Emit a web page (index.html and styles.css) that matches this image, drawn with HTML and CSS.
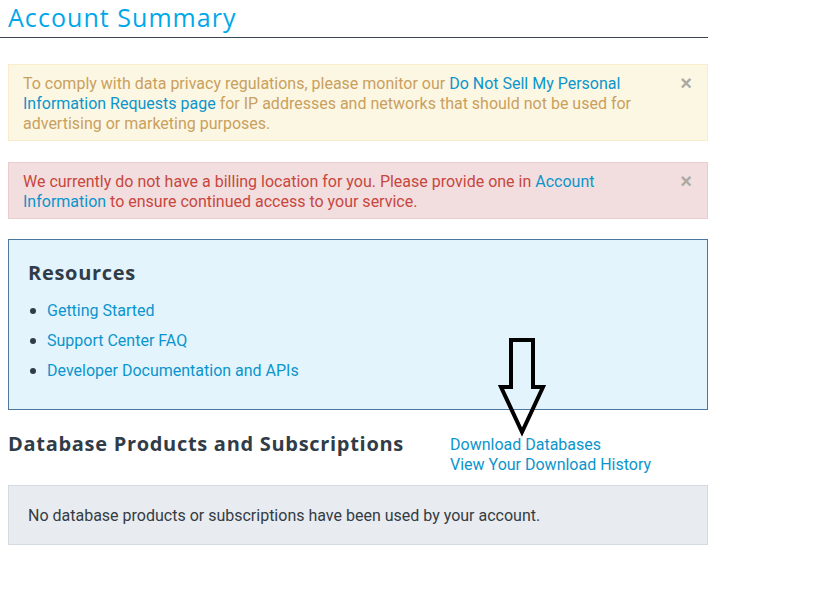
FILE: index.html
```html
<!DOCTYPE html>
<html>
<head>
<meta charset="utf-8">
<link rel="stylesheet" href="styles.css">
</head>
<body>
<main class="page">
  <h1 class="title">Account Summary</h1>
  <div class="alert alert-warning">
    <span class="close">×</span>
    To comply with data privacy regulations, please monitor our <a href="#">Do Not Sell My Personal Information Requests page</a> for IP addresses and networks that should not be used for advertising or marketing purposes.
  </div>
  <div class="alert alert-danger">
    <span class="close">×</span>
    We currently do not have a billing location for you. Please provide one in <a href="#">Account Information</a> to ensure continued access to your service.
  </div>
  <section class="resources">
    <h2 class="res-title">Resources</h2>
    <ul class="res-list">
      <li><a href="#">Getting Started</a></li>
      <li><a href="#">Support Center FAQ</a></li>
      <li><a href="#">Developer Documentation and APIs</a></li>
    </ul>
  </section>
  <div class="db-row">
    <h2 class="db-title">Database Products and Subscriptions</h2>
    <div class="db-links">
      <a href="#">Download Databases</a>
      <a href="#">View Your Download History</a>
    </div>
  </div>
  <div class="empty">No database products or subscriptions have been used by your account.</div>
  <svg class="arrow" width="52" height="100" viewBox="0 0 52 100">
    <path d="M14 3 H36 V50 H46 L25 95 L4 50 H14 Z" fill="none" stroke="#000" stroke-width="4" stroke-linejoin="miter"/>
  </svg>
</main>
</body>
</html>
```
FILE: styles.css
```css
html, body {
  margin: 0;
  padding: 0;
  background: #fff;
}
body {
  font-family: Roboto, "Liberation Sans", sans-serif;
  font-size: 16px;
  line-height: 20px;
  color: #333;
}
a {
  color: #0b95cc;
  text-decoration: none;
}
.page {
  position: relative;
  width: 708px;
}
.title {
  margin: 0;
  padding: 2px 0 5px 8px;
  font-family: "Open Sans", "Liberation Sans", sans-serif;
  font-weight: 400;
  font-size: 25px;
  line-height: 30px;
  letter-spacing: 1.05px;
  color: #00a8ea;
  border-bottom: 1px solid #3b4651;
}
.alert {
  position: relative;
  margin-left: 8px;
  padding: 9px 40px 6px 14px;
  border: 1px solid;
}
.alert-warning {
  margin-top: 26px;
  background: #fcf7e3;
  border-color: #f9ebcc;
  color: #c9a05e;
}
.alert-danger {
  margin-top: 21px;
  background: #f2dede;
  border-color: #ebccd1;
  color: #c7473f;
}
.close {
  position: absolute;
  right: 15px;
  top: 8px;
  font-size: 20px;
  font-weight: 700;
  color: #a9a9a6;
  font-family: "Liberation Sans", sans-serif;
}
.resources {
  margin: 20px 0 0 8px;
  padding: 21px 19px 28px;
  background: #e3f4fd;
  border: 1px solid #4e77a0;
}
.res-title {
  margin: 0 0 16px;
  font-family: "Open Sans", "Liberation Sans", sans-serif;
  font-weight: 700;
  font-size: 20px;
  line-height: 24px;
  letter-spacing: 0.7px;
  color: #303c47;
}
.res-list {
  margin: 0;
  padding: 0;
  list-style: none;
}
.res-list li {
  display: flex;
  align-items: center;
  gap: 11px;
  line-height: 20px;
  margin-bottom: 10px;
}
.res-list li::before {
  content: "";
  width: 6px;
  height: 6px;
  margin-left: 2px;
  border-radius: 50%;
  background: #303c47;
}
.res-list li:last-child {
  margin-bottom: 0;
}
.db-row {
  display: flex;
  align-items: flex-start;
  margin: 24px 0 0 8px;
}
.db-title {
  width: 442px;
  margin: 0;
  font-family: "Open Sans", "Liberation Sans", sans-serif;
  font-weight: 700;
  font-size: 20px;
  line-height: 20px;
  letter-spacing: 0.7px;
  color: #303c47;
}
.db-links {
  display: flex;
  flex-direction: column;
  margin-top: 1px;
}
.empty {
  margin: 10px 0 0 8px;
  padding: 20px 19px 18px;
  background: #e8ebef;
  border: 1px solid #d4dae2;
  color: #333c44;
}
.arrow {
  position: absolute;
  left: 497px;
  top: 337px;
}
```
